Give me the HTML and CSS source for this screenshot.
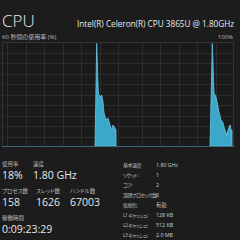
FILE: index.html
```html
<!DOCTYPE html>
<html lang="ja">
<head>
  <meta charset="UTF-8">
  <title>CPU</title>
  <link rel="stylesheet" href="styles.css">
</head>
<body>

  <div class="head">
    <span class="title">CPU</span>
    <span class="model">Intel(R) Celeron(R) CPU 3865U @ 1.80GHz</span>
  </div>

  <div class="sub">
    <span>60 秒間の使用率 (%)</span>
    <span>100%</span>
  </div>

  <svg class="graph" width="232" height="105" viewBox="2 42 232 105">
    <rect x="2" y="42" width="232" height="105" fill="#1a1a1a"/>
    <g stroke="#2c2c2c" stroke-width="1">
      <line x1="2" y1="53.5" x2="234" y2="53.5"/>
      <line x1="2" y1="63.5" x2="234" y2="63.5"/>
      <line x1="2" y1="74.5" x2="234" y2="74.5"/>
      <line x1="2" y1="84.5" x2="234" y2="84.5"/>
      <line x1="2" y1="95.5" x2="234" y2="95.5"/>
      <line x1="2" y1="105.5" x2="234" y2="105.5"/>
      <line x1="2" y1="116.5" x2="234" y2="116.5"/>
      <line x1="2" y1="126.5" x2="234" y2="126.5"/>
      <line x1="2" y1="137.5" x2="234" y2="137.5"/>
      <line x1="7.5" y1="42" x2="7.5" y2="147"/>
      <line x1="26.5" y1="42" x2="26.5" y2="147"/>
      <line x1="44.5" y1="42" x2="44.5" y2="147"/>
      <line x1="63.5" y1="42" x2="63.5" y2="147"/>
      <line x1="81.5" y1="42" x2="81.5" y2="147"/>
      <line x1="100.5" y1="42" x2="100.5" y2="147"/>
      <line x1="118.5" y1="42" x2="118.5" y2="147"/>
      <line x1="142.5" y1="42" x2="142.5" y2="147"/>
      <line x1="160.5" y1="42" x2="160.5" y2="147"/>
      <line x1="179.5" y1="42" x2="179.5" y2="147"/>
      <line x1="197.5" y1="42" x2="197.5" y2="147"/>
      <line x1="216.5" y1="42" x2="216.5" y2="147"/>
    </g>
    <rect x="2.5" y="42.5" width="231" height="104" fill="none" stroke="#333"/>
    <polygon fill="#3ba8c9" stroke="#6cc7e3" stroke-width="0.8"
      points="95,146 96.7,43.5 98.3,93 100,97 101.7,95 103,102 104,113 106,120 108,118 110,125 112,130 113,125 115,128 116,130 116,146"/>
    <polygon fill="#3ba8c9" stroke="#6cc7e3" stroke-width="0.8"
      points="210,146 212.3,43.5 214,93 216,97 217.7,105 219,112 221,120 222.7,122 224,127 226.7,135 228,130 230,125 231,130 232,130 232,146"/>
    <line x1="2" y1="146.5" x2="234" y2="146.5" stroke="#3d6878"/>
  </svg>

  <div class="stats">
    <div class="left">
      <div class="row">
        <div class="stat w31">
          <div class="label">使用率</div>
          <div class="value">18%</div>
        </div>
        <div class="stat">
          <div class="label">速度</div>
          <div class="value">1.80 GHz</div>
        </div>
      </div>
      <div class="row">
        <div class="stat w34">
          <div class="label">プロセス数</div>
          <div class="value">158</div>
        </div>
        <div class="stat w34">
          <div class="label">スレッド数</div>
          <div class="value">1626</div>
        </div>
        <div class="stat">
          <div class="label">ハンドル数</div>
          <div class="value">67003</div>
        </div>
      </div>
      <div class="row">
        <div class="stat">
          <div class="label">稼働時間</div>
          <div class="value">0:09:23:29</div>
        </div>
      </div>
    </div>

    <table class="info">
      <tr><td>基本速度:</td><td>1.80 GHz</td></tr>
      <tr><td>ソケット:</td><td>1</td></tr>
      <tr><td>コア:</td><td>2</td></tr>
      <tr><td>論理プロセッサ数:</td><td>2</td></tr>
      <tr><td>仮想化:</td><td>有効</td></tr>
      <tr><td>L1 キャッシュ:</td><td>128 KB</td></tr>
      <tr><td>L2 キャッシュ:</td><td>512 KB</td></tr>
      <tr><td>L3 キャッシュ:</td><td>2.0 MB</td></tr>
    </table>
  </div>

</body>
</html>
```

FILE: styles.css
```css
body {
  margin: 0;
  background: #1c1c1c;
  color: #e8e8e8;
  font-family: "Open Sans", "Noto Sans CJK JP", sans-serif;
  font-feature-settings: "palt";
  width: 240px;
  height: 240px;
  overflow: hidden;
}

.head {
  display: flex;
  align-items: baseline;
  padding: 8px 0 0 2px;
  height: 25px;
}

.title {
  flex-shrink: 0;
  font-size: 17px;
  font-weight: 300;
  width: 75px;
  line-height: 25px;
}

.model {
  font-size: 8.2px;
  white-space: nowrap;
}

.sub {
  display: flex;
  justify-content: space-between;
  width: 231px;
  padding-left: 2px;
  font-size: 6px;
  color: #bdbdbd;
  height: 9px;
  line-height: 9px;
}

.graph {
  display: block;
  margin-left: 2px;
}

.stats {
  display: flex;
  padding: 13px 0 0 2px;
}

.left {
  width: 121px;
  flex-shrink: 0;
}

.row {
  display: flex;
  margin-bottom: 5px;
}

.w31 {
  width: 31px;
}

.w34 {
  width: 34px;
}

.label {
  font-size: 5.5px;
  color: #bdbdbd;
  line-height: 9px;
}

.value {
  font-size: 10.5px;
  line-height: 13px;
}

.info {
  border-collapse: collapse;
  table-layout: fixed;
  width: 110px;
  font-size: 5.3px;
  color: #d0d0d0;
}

.info td {
  padding: 0;
  height: 8.9px;
  line-height: 8.9px;
  white-space: nowrap;
}

.info td:first-child {
  width: 33px;
  font-size: 5px;
  color: #bdbdbd;
  letter-spacing: -0.55px;
}
```
